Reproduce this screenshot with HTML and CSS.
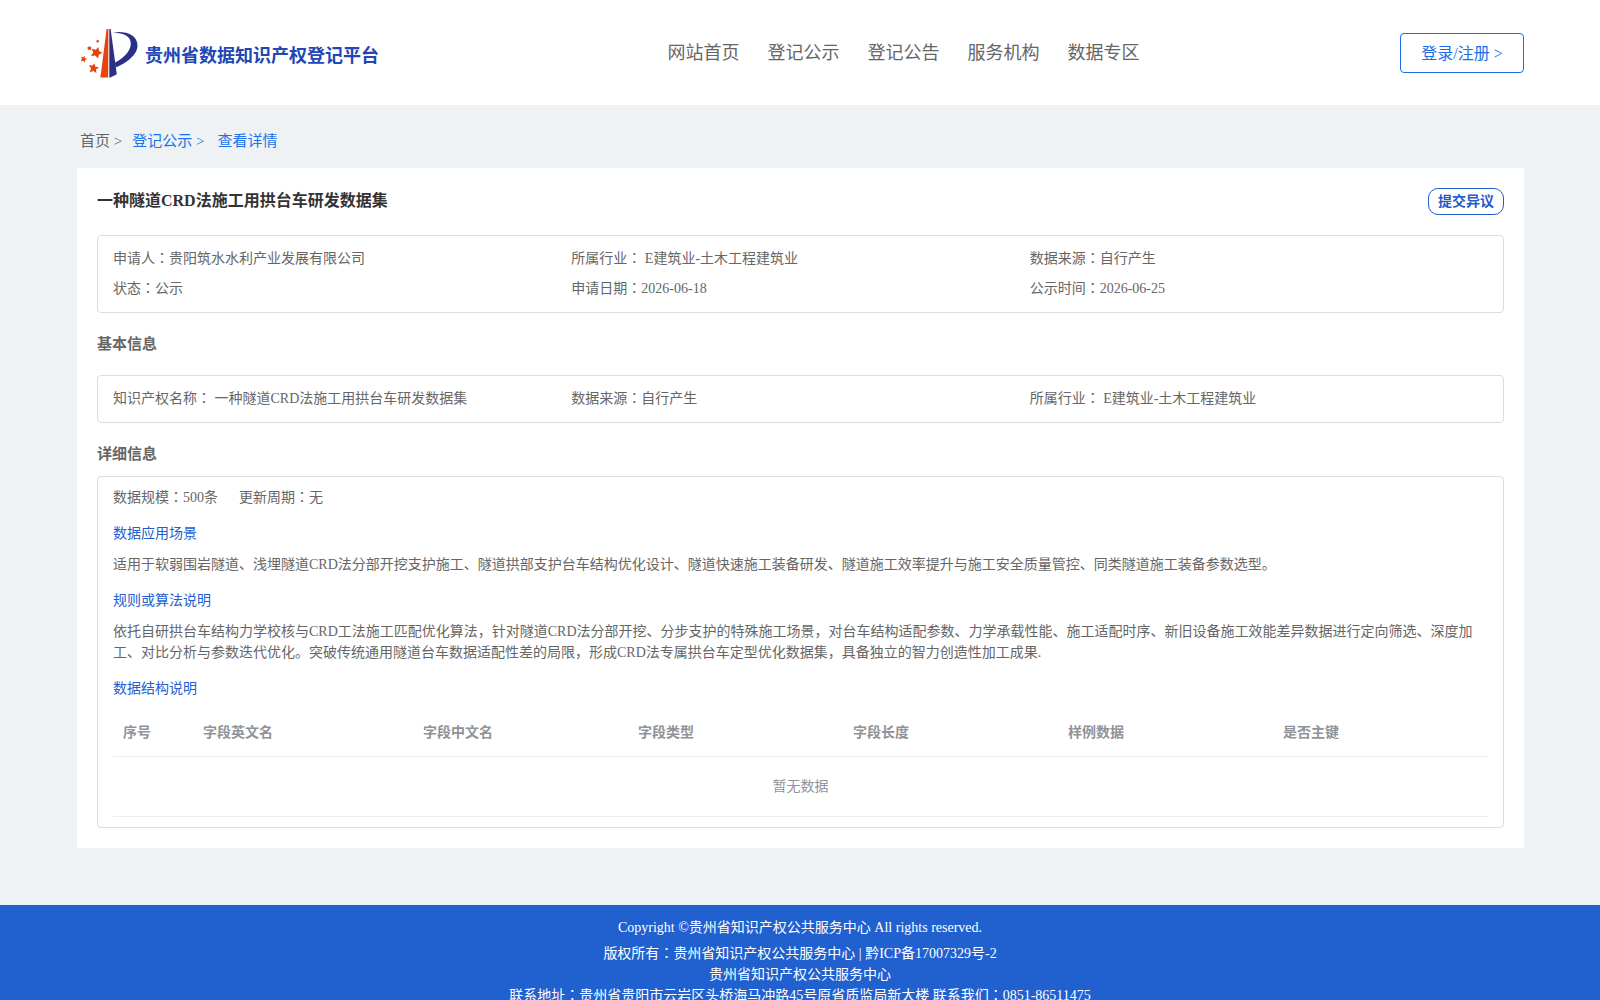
FILE: index.html
```html
<!DOCTYPE html>
<html lang="zh-CN">
<head>
<meta charset="utf-8">
<meta name="viewport" content="width=device-width, initial-scale=1">
<title>贵州省数据知识产权登记平台</title>
<link rel="stylesheet" href="styles.css">
</head>
<body>
<header class="header">
  <a class="brand" href="#">
    <svg class="brand-mark" viewBox="0 0 58 50" width="58" height="50" aria-hidden="true">
      <path fill="#e8420f" d="M26.6 1h1.8L28.200 49.400H20.400Z"/>
      <path fill="#2b3087" d="M29.300 1h1.300L36.800 46.200 30.400 49.400H29.300Z"/>
      <path fill="#2b3087" d="M32.500 4.600C44 2.500 57.500 6 57.500 17.500 57.500 27 46 35.500 35.500 39.500L35 34.600C43 30.500 50.800 23.500 50.800 15.500 50.800 7.500 42 4.800 32.500 4.600Z"/>
      <g fill="#e8420f">
        <path d="M18.500 18.900 19 22.900 22.500 25 18.900 26.600 18.100 30.600 15.200 27.600 10.900 28 13.200 24.500 11.600 20.800 15.700 21.800Z"/>
        <path d="M14.400 35.200 15.400 38.700 19 39.300 16 41.500 16.500 45.200 13.500 43 9.600 44.200 11.100 40.400 8.900 37.300 12.700 37.500Z"/>
        <path d="M4.500 27.800 5 30.200 7.300 31 5.100 32.100 4.800 34.500 3.100 32.800.8 33.200 1.900 31.100.9 29.100 3.200 29.500Z"/>
        <path d="M9.600 18.200 11.300 19.300 10.700 22 8 21.700 7.300 19.600Z"/>
        <circle cx="17.700" cy="13.200" r="1.300"/>
      </g>
    </svg>
    <span class="brand-name">贵州省数据知识产权登记平台</span>
  </a>
  <nav class="nav">
    <a href="#">网站首页</a>
    <a href="#">登记公示</a>
    <a href="#">登记公告</a>
    <a href="#">服务机构</a>
    <a href="#">数据专区</a>
  </nav>
  <button class="login" type="button">登录/注册 &gt;</button>
</header>

<main class="main">
  <nav class="crumbs">
    <a class="crumb-home" href="#">首页 &gt;</a>
    <a href="#">登记公示 &gt;</a>
    <a class="crumb-current" href="#">查看详情</a>
  </nav>

  <article class="card">
    <div class="card-head">
      <h1>一种隧道CRD法施工用拱台车研发数据集</h1>
      <button class="objection" type="button">提交异议</button>
    </div>

    <div class="panel facts">
      <span>申请人<span class="mark" lang="zh-TW">：</span>贵阳筑水水利产业发展有限公司</span>
      <span>所属行业<span class="mark" lang="zh-TW">：</span> E建筑业-土木工程建筑业</span>
      <span>数据来源<span class="mark" lang="zh-TW">：</span>自行产生</span>
      <span>状态<span class="mark" lang="zh-TW">：</span>公示</span>
      <span>申请日期<span class="mark" lang="zh-TW">：</span>2026-06-18</span>
      <span>公示时间<span class="mark" lang="zh-TW">：</span>2026-06-25</span>
    </div>

    <h2 class="title-basic">基本信息</h2>
    <div class="panel facts">
      <span>知识产权名称<span class="mark" lang="zh-TW">：</span> 一种隧道CRD法施工用拱台车研发数据集</span>
      <span>数据来源<span class="mark" lang="zh-TW">：</span>自行产生</span>
      <span>所属行业<span class="mark" lang="zh-TW">：</span> E建筑业-土木工程建筑业</span>
    </div>

    <h2 class="title-detail">详细信息</h2>
    <section class="panel detail">
      <p class="scale"><span>数据规模<span class="mark" lang="zh-TW">：</span>500条</span><span>更新周期<span class="mark" lang="zh-TW">：</span>无</span></p>
      <h3>数据应用场景</h3>
      <p>适用于软弱围岩隧道、浅埋隧道CRD法分部开挖支护施工、隧道拱部支护台车结构优化设计、隧道快速施工装备研发、隧道施工效率提升与施工安全质量管控、同类隧道施工装备参数选型。</p>
      <h3>规则或算法说明</h3>
      <p>依托自研拱台车结构力学校核与CRD工法施工匹配优化算法，针对隧道CRD法分部开挖、分步支护的特殊施工场景，对台车结构适配参数、力学承载性能、施工适配时序、新旧设备施工效能差异数据进行定向筛选、深度加工、对比分析与参数迭代优化。突破传统通用隧道台车数据适配性差的局限，形成CRD法专属拱台车定型优化数据集，具备独立的智力创造性加工成果.</p>
      <h3>数据结构说明</h3>
      <table class="fields">
        <thead>
          <tr>
            <th class="col-index" scope="col">序号</th>
            <th class="col-name" scope="col">字段英文名</th>
            <th scope="col">字段中文名</th>
            <th scope="col">字段类型</th>
            <th scope="col">字段长度</th>
            <th scope="col">样例数据</th>
            <th scope="col">是否主键</th>
          </tr>
        </thead>
        <tbody>
          <tr><td class="empty" colspan="7">暂无数据</td></tr>
        </tbody>
      </table>
    </section>
  </article>
</main>

<footer class="footer">
  <p class="copyright">Copyright ©贵州省知识产权公共服务中心 All rights reserved.</p>
  <p>版权所有<span class="mark" lang="zh-TW">：</span>贵州省知识产权公共服务中心 | 黔ICP备17007329号-2</p>
  <p>贵州省知识产权公共服务中心</p>
  <p>联系地址<span class="mark" lang="zh-TW">：</span>贵州省贵阳市云岩区头桥海马冲路45号原省质监局新大楼 联系我们<span class="mark" lang="zh-TW">：</span>0851-86511475</p>
</footer>
</body>
</html>
```

FILE: styles.css
```css
* {
  box-sizing: border-box;
}

body {
  margin: 0;
  background: #eef2f5;
  color: #666;
  font: 14px/21px "Liberation Serif", "Noto Sans CJK SC", serif;
}

h1, h2, h3, p {
  margin: 0;
}

a {
  color: inherit;
  text-decoration: none;
}

button {
  background: #fff;
  font-family: inherit;
  cursor: pointer;
}

/* full-width punctuation centred in its square */
.mark {
  font-family: "Noto Sans CJK TC", sans-serif;
  line-height: 1;
}

.header {
  display: grid;
  grid-template-columns: 1fr auto 1fr;
  align-items: center;
  height: 105px;
  padding: 0 76px 0 77px;
  background: #fff;
}

.brand {
  display: flex;
  align-items: center;
  gap: 7px;
  padding-left: 3px;
}

.brand-name {
  padding-top: 7px;
  color: #2346b5;
  font-size: 18px;
  font-weight: 700;
  white-space: nowrap;
}

.nav {
  display: flex;
  gap: 28px;
  padding: 2px 0 0 206px;
  font-size: 18px;
}

.login {
  justify-self: end;
  width: 124px;
  height: 40px;
  padding: 0 0 2px;
  border: 1px solid #1a6ee8;
  border-radius: 4px;
  color: #1a6ee8;
  font-size: 16px;
}

.main {
  padding: 0 76px 57px 77px;
}

.crumbs {
  display: flex;
  align-items: center;
  height: 63px;
  padding: 10px 3px 0;
  gap: 10px;
  color: #1a73e8;
  font-size: 15px;
}

.crumb-home {
  color: #666;
}

.crumb-current {
  padding-left: 3px;
}

.card {
  padding: 20px;
  background: #fff;
}

.card-head {
  display: flex;
  justify-content: space-between;
  height: 47px;
}

h1 {
  color: #333;
  font-size: 16px;
  line-height: 26px;
}

.objection {
  width: 76px;
  height: 27px;
  padding: 0 0 3px;
  border: 1px solid #1f5ccc;
  border-radius: 10px;
  color: #1f5ccc;
  font-size: 14px;
  font-weight: 700;
}

.panel {
  border: 1px solid #dcdcdc;
  border-radius: 4px;
}

.facts {
  display: grid;
  grid-template-columns: repeat(3, 1fr);
  padding: 8px 15px;
  line-height: 30px;
}

h2 {
  font-size: 15px;
  line-height: 22px;
}

.title-basic {
  padding: 20px 0;
}

.title-detail {
  padding: 20px 0 11px;
}

.detail {
  padding: 10px 15px;
}

.scale {
  display: flex;
  gap: 21px;
}

h3 {
  padding: 15px 0 10px;
  color: #2160cf;
  font-size: 14px;
  font-weight: 400;
}

.fields {
  width: 100%;
  table-layout: fixed;
  border-collapse: collapse;
  color: #909399;
}

.fields th {
  height: 47px;
  padding: 0 10px;
  border-bottom: 1px solid #ebeef5;
  text-align: left;
}

.fields .col-index {
  width: 80px;
}

.fields .col-name {
  width: 220px;
}

.fields .empty {
  height: 60px;
  padding: 0;
  border-bottom: 1px solid #ebeef5;
  text-align: center;
}

.footer {
  padding: 12px 0 20px;
  background: #2160cf;
  color: #fff;
  text-align: center;
}

.copyright {
  padding-bottom: 5px;
}
```
